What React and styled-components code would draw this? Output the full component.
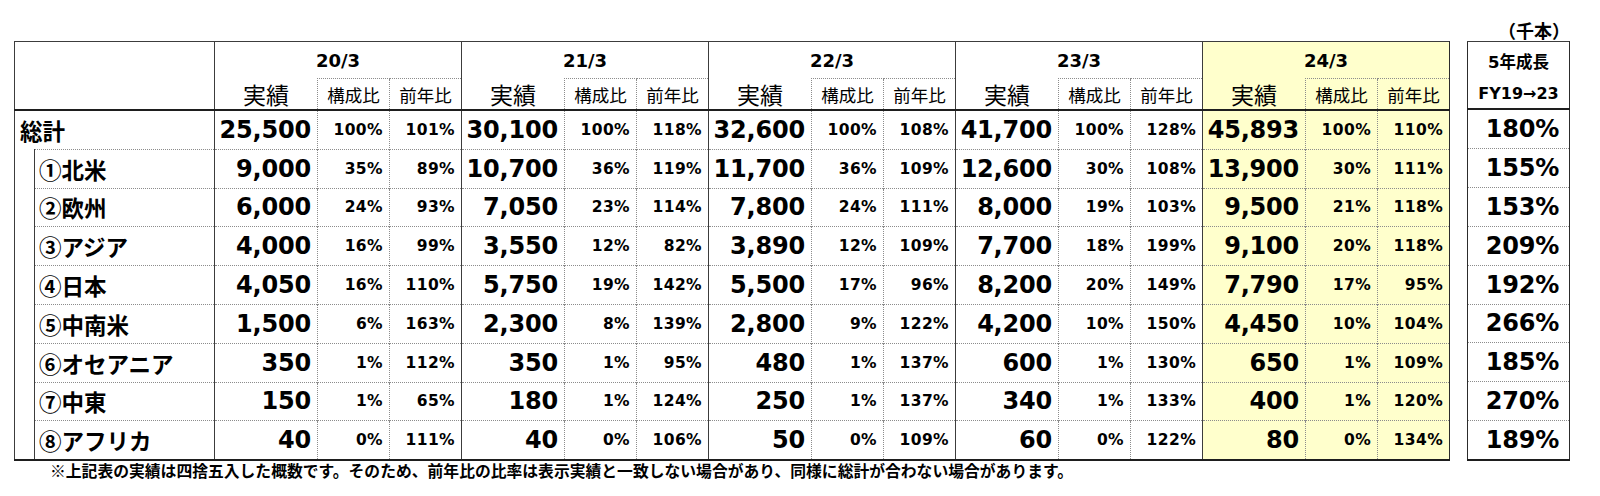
import styled, { createGlobalStyle } from "styled-components";

const GlobalStyle = createGlobalStyle`
    body {
        margin: 0;
        background: #ffffff;
        color: #000000;
        font-family: "DejaVu Sans", "Noto Sans CJK JP", sans-serif;
    }
`;

const groups = ["20/3", "21/3", "22/3", "23/3", "24/3"];

const total = {
    label: "総計",
    values: [
        [25500, 100, 101],
        [30100, 100, 118],
        [32600, 100, 108],
        [41700, 100, 128],
        [45893, 100, 110],
    ],
    growth: 180,
};

const regions = [
    { label: "①北米", values: [[9000, 35, 89], [10700, 36, 119], [11700, 36, 109], [12600, 30, 108], [13900, 30, 111]], growth: 155 },
    { label: "②欧州", values: [[6000, 24, 93], [7050, 23, 114], [7800, 24, 111], [8000, 19, 103], [9500, 21, 118]], growth: 153 },
    { label: "③アジア", values: [[4000, 16, 99], [3550, 12, 82], [3890, 12, 109], [7700, 18, 199], [9100, 20, 118]], growth: 209 },
    { label: "④日本", values: [[4050, 16, 110], [5750, 19, 142], [5500, 17, 96], [8200, 20, 149], [7790, 17, 95]], growth: 192 },
    { label: "⑤中南米", values: [[1500, 6, 163], [2300, 8, 139], [2800, 9, 122], [4200, 10, 150], [4450, 10, 104]], growth: 266 },
    { label: "⑥オセアニア", values: [[350, 1, 112], [350, 1, 95], [480, 1, 137], [600, 1, 130], [650, 1, 109]], growth: 185 },
    { label: "⑦中東", values: [[150, 1, 65], [180, 1, 124], [250, 1, 137], [340, 1, 133], [400, 1, 120]], growth: 270 },
    { label: "⑧アフリカ", values: [[40, 0, 111], [40, 0, 106], [50, 0, 109], [60, 0, 122], [80, 0, 134]], growth: 189 },
];

const fmt = (n) => n.toLocaleString("en-US");

function GroupCells({ values }) {
    return values.map(([amount, share, yoy], i) => {
        const hl = i === groups.length - 1;
        return [
            <AmountCell key={`a${i}`} $hl={hl}>{fmt(amount)}</AmountCell>,
            <RatioCell key={`s${i}`} $hl={hl}>{share}%</RatioCell>,
            <RatioCell key={`y${i}`} $hl={hl}>{yoy}%</RatioCell>,
        ];
    });
}

export default function App() {
    return (
        <>
            <GlobalStyle />
            <Page>
                <Spacer />
                <Unit>（千本）</Unit>

                <MainTable>
                    <colgroup>
                        <col style={{ width: 20 }} />
                        <col style={{ width: 180 }} />
                        {groups.map((g) => [
                            <col key={`${g}a`} style={{ width: 103 }} />,
                            <col key={`${g}b`} style={{ width: 72 }} />,
                            <col key={`${g}c`} style={{ width: 72 }} />,
                        ])}
                    </colgroup>
                    <thead>
                        <tr>
                            <CornerCell colSpan={2} rowSpan={2} />
                            {groups.map((g, i) => (
                                <GroupHead key={g} colSpan={3} $hl={i === groups.length - 1}>
                                    {g}
                                </GroupHead>
                            ))}
                        </tr>
                        <tr>
                            {groups.map((g, i) => {
                                const hl = i === groups.length - 1;
                                return [
                                    <AmountHead key={`${g}a`} $hl={hl}>実績</AmountHead>,
                                    <RatioHead key={`${g}b`} $hl={hl}>構成比</RatioHead>,
                                    <RatioHead key={`${g}c`} $hl={hl}>前年比</RatioHead>,
                                ];
                            })}
                        </tr>
                    </thead>
                    <tbody>
                        <tr>
                            <TotalLabel colSpan={2}>{total.label}</TotalLabel>
                            <GroupCells values={total.values} />
                        </tr>
                        {regions.map((r, idx) => (
                            <tr key={r.label}>
                                {idx === 0 && <IndentCell rowSpan={regions.length} />}
                                <RegionLabel>{r.label}</RegionLabel>
                                <GroupCells values={r.values} />
                            </tr>
                        ))}
                    </tbody>
                </MainTable>

                <SideTable>
                    <thead>
                        <tr>
                            <SideHeadTop>5年成長</SideHeadTop>
                        </tr>
                        <tr>
                            <SideHeadBottom>FY19→23</SideHeadBottom>
                        </tr>
                    </thead>
                    <tbody>
                        <tr>
                            <GrowthCell>{total.growth}%</GrowthCell>
                        </tr>
                        {regions.map((r) => (
                            <tr key={r.label}>
                                <GrowthCell>{r.growth}%</GrowthCell>
                            </tr>
                        ))}
                    </tbody>
                </SideTable>

                <Footnote>
                    ※上記表の実績は四捨五入した概数です。そのため、前年比の比率は表示実績と一致しない場合があり、同様に総計が合わない場合があります。
                </Footnote>
            </Page>
        </>
    );
}

const SOLID = "1px solid #3c3c3c";
const DOTTED = "1px dotted #8c8c8c";
const HEAVY = "2px solid #1e1e1e";
const YELLOW = "#ffffcc";

const Page = styled.div`
    display: grid;
    grid-template-columns: 1435px 103px;
    grid-template-rows: 41px auto auto;
    column-gap: 18px;
    padding-left: 14px;
`;

const Spacer = styled.div``;

const Unit = styled.div`
    align-self: end;
    justify-self: end;
    padding: 0 0 1px 0;
    font-family: "Noto Sans CJK JP", sans-serif;
    font-weight: 700;
    font-size: 18px;
    line-height: 20px;
    white-space: nowrap;
`;

const MainTable = styled.table`
    border-collapse: collapse;
    table-layout: fixed;
    width: 1435px;
    border-top: ${SOLID};
    border-left: ${SOLID};
    border-right: 1.5px solid #2c2c2c;
    border-bottom: ${HEAVY};
`;

const SideTable = styled.table`
    border-collapse: collapse;
    table-layout: fixed;
    width: 103px;
    border-top: ${SOLID};
    border-left: 1.5px solid #2c2c2c;
    border-right: 1.5px solid #2c2c2c;
    border-bottom: ${HEAVY};
`;

const HeadBase = styled.th`
    padding: 0;
    text-align: center;
    vertical-align: middle;
    color: #000;
    background: ${(p) => (p.$hl ? YELLOW : "transparent")};
`;

const CornerCell = styled(HeadBase)`
    border-bottom: ${HEAVY};
`;

const GroupHead = styled(HeadBase)`
    height: 35px;
    border-left: ${SOLID};
    border-bottom: none;
    font-family: "DejaVu Sans", sans-serif;
    font-weight: 700;
    font-size: 18px;
    padding-top: 1px;
`;

const AmountHead = styled(HeadBase)`
    height: 30px;
    border-left: ${SOLID};
    border-top: none;
    border-bottom: ${HEAVY};
    font-family: "Noto Sans CJK JP", sans-serif;
    font-weight: 400;
    font-size: 23px;
    line-height: 28px;
`;

const RatioHead = styled(HeadBase)`
    height: 30px;
    border-left: ${DOTTED};
    border-top: ${DOTTED};
    border-bottom: ${HEAVY};
    font-family: "Noto Sans CJK JP", sans-serif;
    font-weight: 400;
    font-size: 17.5px;
`;

const SideHeadTop = styled(HeadBase)`
    height: 35px;
    font-family: "DejaVu Sans", "Noto Sans CJK JP", sans-serif;
    font-weight: 700;
    font-size: 16.5px;
    padding-top: 1px;
`;

const SideHeadBottom = styled(HeadBase)`
    height: 30px;
    border-bottom: ${HEAVY};
    font-family: "DejaVu Sans", "Noto Sans CJK JP", sans-serif;
    font-weight: 700;
    font-size: 16px;
`;

const BodyCell = styled.td`
    height: 37.8px;
    padding: 0 6px 0 0;
    text-align: right;
    vertical-align: middle;
    white-space: nowrap;
    color: #000;
    font-family: "DejaVu Sans", sans-serif;
    font-weight: 700;
    border-top: ${DOTTED};
    background: ${(p) => (p.$hl ? YELLOW : "transparent")};
`;

const AmountCell = styled(BodyCell)`
    border-left: ${SOLID};
    font-size: 24px;
    letter-spacing: -0.2px;
`;

const RatioCell = styled(BodyCell)`
    border-left: ${DOTTED};
    font-size: 15.5px;
    letter-spacing: 0.4px;
`;

const GrowthCell = styled(BodyCell)`
    padding-right: 10px;
    font-size: 24px;
    letter-spacing: -0.2px;
`;

const TotalLabel = styled.td`
    height: 37.8px;
    padding: 0 0 0 5px;
    text-align: left;
    vertical-align: middle;
    font-family: "Noto Sans CJK JP", sans-serif;
    font-weight: 700;
    font-size: 22.5px;
    border-bottom: none;
`;

const IndentCell = styled.td`
    padding: 0;
    border-top: none;
`;

const RegionLabel = styled.td`
    height: 37.8px;
    padding: 0 0 0 4px;
    text-align: left;
    vertical-align: middle;
    white-space: nowrap;
    font-family: "Noto Sans CJK JP", sans-serif;
    font-weight: 700;
    font-size: 22.5px;
    letter-spacing: 0;
    border-left: ${SOLID};
    border-top: ${DOTTED};
`;

const Footnote = styled.p`
    grid-column: 1 / -1;
    margin: 0;
    padding: 0 0 0 36px;
    font-family: "Noto Sans CJK JP", sans-serif;
    font-weight: 700;
    font-size: 15.8px;
    line-height: 20px;
    letter-spacing: 0;
`;
